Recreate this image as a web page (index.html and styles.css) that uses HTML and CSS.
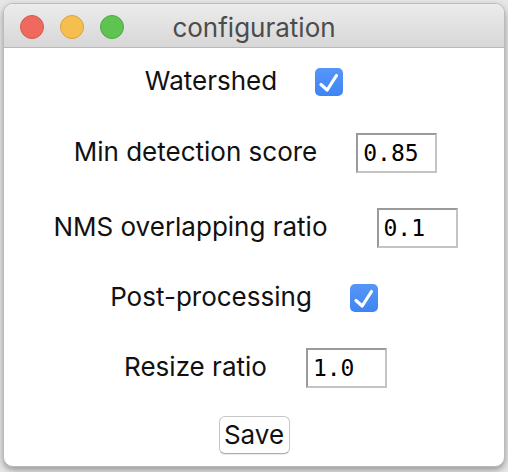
FILE: index.html
```html
<!DOCTYPE html>
<html lang="en">
<head>
<meta charset="utf-8">
<title>configuration</title>
<link rel="stylesheet" href="styles.css">
</head>
<body>
<div class="window">
  <header class="titlebar">
    <div class="lights">
      <span class="light light--close"></span>
      <span class="light light--min"></span>
      <span class="light light--max"></span>
    </div>
    <div class="title">configuration</div>
    <div></div>
  </header>
  <main class="content">
    <div class="row">
      <span class="label">Watershed</span>
      <span class="checkbox" role="checkbox" aria-checked="true">
        <svg width="28" height="28" viewBox="0 0 28 28"><path d="M6 16.5 L12.2 22 L21.5 7.5" fill="none" stroke="#fff" stroke-width="3.2" stroke-linecap="round" stroke-linejoin="round"/></svg>
      </span>
    </div>
    <div class="row row--entry row--tight">
      <span class="label">Min detection score</span>
      <input class="entry" type="text" value="0.85">
    </div>
    <div class="row row--entry row--wide">
      <span class="label">NMS overlapping ratio</span>
      <input class="entry" type="text" value="0.1">
    </div>
    <div class="row">
      <span class="label">Post-processing</span>
      <span class="checkbox" role="checkbox" aria-checked="true">
        <svg width="28" height="28" viewBox="0 0 28 28"><path d="M6 16.5 L12.2 22 L21.5 7.5" fill="none" stroke="#fff" stroke-width="3.2" stroke-linecap="round" stroke-linejoin="round"/></svg>
      </span>
    </div>
    <div class="row row--entry">
      <span class="label">Resize ratio</span>
      <input class="entry" type="text" value="1.0">
    </div>
    <div class="actions">
      <button class="btn" type="button">Save</button>
    </div>
  </main>
</div>
</body>
</html>
```

FILE: styles.css
```css
* { box-sizing: border-box; }

html, body {
  margin: 0;
  padding: 0;
}

body {
  width: 508px;
  height: 472px;
  background: #e6e6e6;
  font-family: Inter, "Noto Sans", sans-serif;
  overflow: hidden;
}

.window {
  margin: 3px 0 0 3px;
  width: 502px;
  height: 464px;
  background: #ffffff;
  border: 1px solid #bcbcbc;
  border-radius: 10px;
  box-shadow: 0 3px 6px rgba(0, 0, 0, 0.35);
  overflow: hidden;
  display: flex;
  flex-direction: column;
}

.titlebar {
  height: 44px;
  flex: none;
  display: grid;
  grid-template-columns: 1fr auto 1fr;
  align-items: center;
  padding-top: 2px;
  background: linear-gradient(#ececec, #d7d7d7);
  border-bottom: 1px solid #b9b9b9;
}

.lights {
  display: flex;
  gap: 16px;
  padding-left: 16px;
}

.light {
  width: 24px;
  height: 24px;
  border-radius: 50%;
  border: 1px solid;
}

.light--close { background: #ef6a5e; border-color: #d5574c; }
.light--min { background: #f6be4f; border-color: #d9a23c; }
.light--max { background: #5fc351; border-color: #4ea83f; }

.title {
  font-size: 26px;
  color: #4c4c4c;
  line-height: 1;
  padding-top: 2px;
}

.content {
  display: flex;
  flex-direction: column;
  padding-top: 14px;
  gap: 30px;
}

.row {
  height: 40px;
  display: flex;
  justify-content: center;
  align-items: center;
  gap: 38px;
}

.row--entry {
  padding-left: 3px;
  gap: 39px;
}

.row--tight { margin-top: 1px; }

.row--wide {
  margin-top: 5px;
  gap: 49px;
}

.label {
  font-size: 26px;
  color: #111;
  padding-bottom: 3px;
  line-height: 1.2;
}

.checkbox {
  width: 28px;
  height: 28px;
  border-radius: 5px;
  background: linear-gradient(#5596f7, #3f84f4);
  margin-right: 20px;
  display: flex;
}

.entry {
  width: 81px;
  height: 40px;
  margin: 0;
  padding: 0 0 0 5px;
  border: 2px solid;
  border-color: #9a9a9a #c4c4c4 #c4c4c4 #9a9a9a;
  border-radius: 0;
  background: #fff;
  font-family: "DejaVu Sans Mono", "Liberation Mono", monospace;
  font-size: 23px;
  color: #000;
  outline: none;
}

.actions {
  display: flex;
  justify-content: center;
  margin-top: -2px;
}

.btn {
  width: 71px;
  height: 38px;
  padding: 0 0 2px 0;
  margin: 0;
  background: #fff;
  border: 1px solid #c6c6c6;
  border-bottom-color: #adadad;
  border-radius: 6px;
  box-shadow: 0 1px 1px rgba(0, 0, 0, 0.08);
  font-family: Inter, "Noto Sans", sans-serif;
  font-size: 26px;
  color: #111;
}
```
